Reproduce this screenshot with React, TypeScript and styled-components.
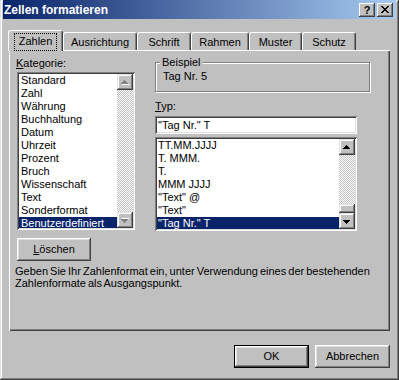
import React from "react";
import styled, { createGlobalStyle } from "styled-components";

const face = "#c0c0c0";
const navy = "#0a246a";

const GlobalStyle = createGlobalStyle`
  html, body { margin: 0; padding: 0; background: ${face}; }
  body {
    font-family: "Liberation Sans", Arial, sans-serif;
    font-size: 11px;
    color: #000;
  }
`;

const Window = styled.div`
  width: 399px;
  height: 380px;
  box-sizing: border-box;
  padding: 0 3px 3px 3px;
  background: ${face};
  box-shadow: inset -1px -1px #404040, inset 1px 1px #dfdfdf,
    inset -2px -2px #808080, inset 2px 2px #fff;
  display: flex;
  flex-direction: column;
`;

const TitleBar = styled.div`
  height: 19px;
  display: flex;
  align-items: center;
  padding: 0 3px 0 1px;
  background: linear-gradient(to right, #0a246a, #a6caf0);
  color: #fff;
  font-weight: bold;
  font-size: 12px;
`;

const TitleText = styled.span`
  flex: 1;
`;

const TitleButton = styled.div<{ $gap?: number }>`
  width: 16px;
  height: 14px;
  box-sizing: border-box;
  margin-left: ${(p) => p.$gap ?? 0}px;
  background: ${face};
  box-shadow: inset -1px -1px #404040, inset 1px 1px #fff,
    inset -2px -2px #808080;
  display: flex;
  align-items: center;
  justify-content: center;
  color: #000;
  font-size: 11px;
  font-weight: bold;
  line-height: 14px;
`;

const Body = styled.div`
  padding: 0 6px;
  display: flex;
  flex-direction: column;
`;

const TabRow = styled.div`
  margin-top: 11px;
  margin-left: -1px;
  height: 21px;
  margin-bottom: -1px;
  display: flex;
  align-items: flex-end;
  position: relative;
  z-index: 1;
`;

const Tab = styled.div<{ $active?: boolean; $w: number }>`
  width: ${(p) => p.$w}px;
  height: ${(p) => (p.$active ? 21 : 18)}px;
  margin-bottom: ${(p) => (p.$active ? 0 : 1)}px;
  box-sizing: border-box;
  padding-top: ${(p) => (p.$active ? 4 : 3)}px;
  background: ${face};
  border-top: 1px solid #fff;
  border-left: 1px solid #fff;
  border-right: 1px solid #404040;
  border-radius: 3px 3px 0 0;
  box-shadow: inset -1px 0 #808080;
  display: flex;
  justify-content: center;
  line-height: 13px;
`;

const FocusLabel = styled.span`
  outline: 1px dotted #000;
  outline-offset: 0;
  padding: 1px 4px 2px 4px;
  margin-top: -1px;
  height: 13px;
`;

const Panel = styled.div`
  height: 281px;
  box-sizing: border-box;
  padding: 7px 6px 0 7px;
  box-shadow: inset 1px 1px #fff, inset -1px -1px #404040,
    inset -2px -2px #808080;
  display: flex;
  flex-direction: column;
`;

const Columns = styled.div`
  display: flex;
  gap: 20px;
`;

const Column = styled.div<{ $w: number }>`
  width: ${(p) => p.$w}px;
  display: flex;
  flex-direction: column;
`;

const Label = styled.div`
  line-height: 13px;
  height: 13px;
`;

const Key = styled.span`
  text-decoration: underline;
  text-underline-offset: 1px;
`;

const ListBox = styled.div<{ $h: number; $w: number; $ml?: number; $mt: number }>`
  width: ${(p) => p.$w}px;
  height: ${(p) => p.$h}px;
  margin-left: ${(p) => p.$ml ?? 0}px;
  margin-top: ${(p) => p.$mt}px;
  box-sizing: border-box;
  padding: 2px;
  background: #fff;
  box-shadow: inset 1px 1px #808080, inset -1px -1px #fff,
    inset 2px 2px #404040, inset -2px -2px #dfdfdf;
  display: flex;
`;

const Items = styled.div`
  flex: 1;
  overflow: hidden;
`;

const Item = styled.div<{ $sel?: boolean; $pl: number }>`
  height: 13px;
  line-height: 13px;
  padding-left: ${(p) => p.$pl}px;
  white-space: nowrap;
  background: ${(p) => (p.$sel ? navy : "transparent")};
  color: ${(p) => (p.$sel ? "#fff" : "#000")};
`;

const ScrollBar = styled.div`
  width: 16px;
  display: flex;
  flex-direction: column;
`;

const Raised = styled.div<{ $h: number }>`
  height: ${(p) => p.$h}px;
  flex: none;
  box-sizing: border-box;
  background: ${face};
  box-shadow: inset -1px -1px #404040, inset 1px 1px #dfdfdf,
    inset -2px -2px #808080, inset 2px 2px #fff;
  display: flex;
  align-items: center;
  justify-content: center;
`;

const Track = styled.div`
  flex: 1;
  background: repeating-conic-gradient(#fff 0 25%, ${face} 0 50%) 0 0 / 2px 2px;
`;

const GroupBox = styled.div`
  position: relative;
  margin-top: 5px;
  width: 215px;
  height: 30px;
  box-sizing: border-box;
  border: 1px solid #808080;
  box-shadow: inset 1px 1px #fff, 1px 1px #fff;
  padding: 7px 7px 0 7px;
  line-height: 13px;
`;

const Legend = styled.span`
  position: absolute;
  top: -7px;
  left: 4px;
  padding: 0 2px;
  line-height: 13px;
  background: ${face};
`;

const TextInput = styled.div`
  margin-top: 3px;
  width: 202px;
  height: 18px;
  box-sizing: border-box;
  padding: 2px 3px;
  line-height: 14px;
  background: #fff;
  box-shadow: inset 1px 1px #808080, inset -1px -1px #fff,
    inset 2px 2px #404040, inset -2px -2px #dfdfdf;
`;

const Button = styled.div<{ $default?: boolean; $w: number; $mt?: number; $ml?: number }>`
  width: ${(p) => p.$w}px;
  height: 23px;
  margin-top: ${(p) => p.$mt ?? 0}px;
  margin-left: ${(p) => p.$ml ?? 0}px;
  box-sizing: border-box;
  background: ${face};
  border: ${(p) => (p.$default ? "1px solid #000" : "none")};
  box-shadow: inset -1px -1px #404040, inset 1px 1px #fff,
    inset -2px -2px #808080, inset 2px 2px #dfdfdf;
  display: flex;
  align-items: center;
  justify-content: center;
  line-height: 13px;
`;

const Description = styled.div`
  margin-top: 4px;
  margin-left: -1px;
  line-height: 12px;
  word-spacing: -1px;
`;

const Footer = styled.div`
  margin-top: 14px;
  display: flex;
  justify-content: flex-end;
  gap: 6px;
`;

const Arrow = ({ down, disabled }: { down?: boolean; disabled?: boolean }) => {
  const d = "M3 0h1v1h1v1h1v1h1v1H0V3h1V2h1V1h1z";
  return (
    <svg width="8" height="5" viewBox="0 0 8 5" shapeRendering="crispEdges"
      style={{ transform: down ? "scaleY(-1)" : undefined }}>
      {disabled && <path d={d} fill="#fff" transform="translate(1 1)" />}
      <path d={d} fill={disabled ? "#808080" : "#000"} />
    </svg>
  );
};

const CloseGlyph = () => {
  const rows = [[0, 1, 6, 7], [1, 2, 5, 6], [2, 3, 4, 5], [3, 4], [2, 3, 4, 5], [1, 2, 5, 6], [0, 1, 6, 7]];
  return (
    <svg width="8" height="7" viewBox="0 0 8 7" shapeRendering="crispEdges">
      {rows.map((r, y) => r.map((x) => <rect key={`${x}-${y}`} x={x} y={y} width="1" height="1" fill="#000" />))}
    </svg>
  );
};

const tabs = [
  { text: "Zahlen", w: 55 },
  { text: "Ausrichtung", w: 74 },
  { text: "Schrift", w: 54 },
  { text: "Rahmen", w: 58 },
  { text: "Muster", w: 53 },
  { text: "Schutz", w: 54 },
];

const categories = [
  "Standard", "Zahl", "Währung", "Buchhaltung", "Datum", "Uhrzeit", "Prozent",
  "Bruch", "Wissenschaft", "Text", "Sonderformat", "Benutzerdefiniert",
];

const formats = ["TT.MM.JJJJ", "T. MMM.", "T.", "MMM JJJJ", "\"Text\" @", "\"Text\"", "\"Tag Nr.\" T"];

const App = () => {
  return (
    <>
      <GlobalStyle />
      <Window>
        <TitleBar>
          <TitleText>Zellen formatieren</TitleText>
          <TitleButton>?</TitleButton>
          <TitleButton $gap={2}><CloseGlyph /></TitleButton>
        </TitleBar>
        <Body>
          <TabRow>
            {tabs.map(({ text, w }, i) => (
              <Tab key={text} $w={w} $active={i === 0}>
                {i === 0 ? <FocusLabel>{text}</FocusLabel> : text}
              </Tab>
            ))}
          </TabRow>
          <Panel>
            <Columns>
              <Column $w={119}>
                <Label><Key>K</Key>ategorie:</Label>
                <ListBox $w={118} $h={158} $ml={1} $mt={2}>
                  <Items>
                    {categories.map((c, i) => (
                      <Item key={c} $pl={2} $sel={i === categories.length - 1}>{c}</Item>
                    ))}
                  </Items>
                  <ScrollBar>
                    <Raised $h={16}><Arrow disabled /></Raised>
                    <Track />
                    <Raised $h={16}><Arrow down disabled /></Raised>
                  </ScrollBar>
                </ListBox>
              </Column>
              <Column $w={216}>
                <GroupBox>
                  <Legend>Beispiel</Legend>
                  Tag Nr. 5
                </GroupBox>
                <Label style={{ marginTop: 8 }}><Key>T</Key>yp:</Label>
                <TextInput>"Tag Nr." T</TextInput>
                <ListBox $w={202} $h={94} $mt={3}>
                  <Items>
                    {formats.map((f, i) => (
                      <Item key={f} $pl={1} $sel={i === formats.length - 1}>{f}</Item>
                    ))}
                  </Items>
                  <ScrollBar>
                    <Raised $h={16}><Arrow /></Raised>
                    <Track />
                    <Raised $h={9} />
                    <Raised $h={16}><Arrow down /></Raised>
                  </ScrollBar>
                </ListBox>
              </Column>
            </Columns>
            <Button $w={74} $mt={7} $ml={1}><Key>L</Key>öschen</Button>
            <Description>
              Geben Sie Ihr Zahlenformat ein, unter Verwendung eines der bestehenden
              <br />
              Zahlenformate als Ausgangspunkt.
            </Description>
          </Panel>
          <Footer>
            <Button $w={75} $default>OK</Button>
            <Button $w={75}>Abbrechen</Button>
          </Footer>
        </Body>
      </Window>
    </>
  );
};

export default App;
